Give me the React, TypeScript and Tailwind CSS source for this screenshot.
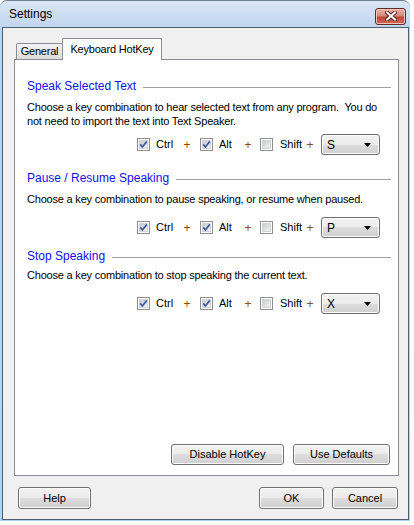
import React from 'react';

const btn =
  'flex items-center rounded-[3px] border border-[#707070] bg-[linear-gradient(to_bottom,#f2f2f2_0%,#ebebeb_50%,#dddddd_50%,#cfcfcf_100%)] text-[11px] text-black shadow-[inset_0_0_0_1px_#fcfcfc]';

const CheckBox: React.FC<{ checked?: boolean }> = ({ checked }) => (
  <svg width="13" height="13" viewBox="0 0 13 13" className="shrink-0">
    <defs>
      <linearGradient id="cbfill" x1="0" y1="0" x2="1" y2="1">
        <stop offset="0" stopColor="#c4c8ce" />
        <stop offset="1" stopColor="#f6f6f6" />
      </linearGradient>
    </defs>
    <rect x="0.5" y="0.5" width="12" height="12" fill="#ffffff" stroke="#8e8f8f" />
    <rect x="2.5" y="2.5" width="8" height="8" fill="url(#cbfill)" stroke="#d2d4d8" />
    {checked && (
      <path d="M3.2 6.4 L5.4 9 L9.8 3.4" fill="none" stroke="#3e5c9a" strokeWidth="1.7" />
    )}
  </svg>
);

const Plus = () => (
  <span className="w-[14px] text-center text-[12px] text-[#8a4a10]">+</span>
);

const Combo: React.FC<{ value: string }> = ({ value }) => (
  <div className={`${btn} ml-[4px] h-[21px] w-[59px] justify-between pl-[5px] pr-[8px] text-[12px]`}>
    <span>{value}</span>
    <svg width="7" height="4" viewBox="0 0 7 4">
      <polygon points="0,0 7,0 3.5,4" fill="#000" />
    </svg>
  </div>
);

const HotKeyRow: React.FC<{ keyName: string; top: string }> = ({ keyName, top }) => (
  <div className={`flex h-[21px] items-center pl-[110px] text-[11px] ${top}`}>
    <CheckBox checked />
    <span className="ml-[6px] w-[24px]">Ctrl</span>
    <Plus />
    <span className="ml-[6px] flex"><CheckBox checked /></span>
    <span className="ml-[6px] w-[22px]">Alt</span>
    <Plus />
    <span className="ml-[5px] flex"><CheckBox /></span>
    <span className="ml-[7px] w-[23px]">Shift</span>
    <Plus />
    <Combo value={keyName} />
  </div>
);

const Heading: React.FC<{ title: string; top: string }> = ({ title, top }) => (
  <div className={`flex h-[16px] items-center pr-[7px] ${top}`}>
    <span className="whitespace-nowrap text-[12px] text-[#1010ee]">{title}</span>
    <span className="ml-[7px] mt-[2px] h-px flex-1 bg-[#a0a0a0]" />
  </div>
);

export default function App() {
  return (
    <div className="min-h-screen bg-white font-['Liberation_Sans',Arial,sans-serif] text-black">
      <div className="flex h-[521px] w-[410px] flex-col rounded-t-[7px] border-t border-[#6e8296] bg-[linear-gradient(to_bottom,#d9e6f5_0px,#c0d6ee_26px,#b5d6f0_27px,#a9d6f2_100%)] pb-px pl-[2px] pr-px">
        {/* title bar */}
        <div className="flex h-[26px] items-center justify-between pl-[7px] pr-[3px]">
          <span className="text-[12px] text-black">Settings</span>
          <div className="mt-[4px] flex h-[17px] w-[31px] items-center justify-center rounded-[3px] border border-[#6a2a24] bg-[linear-gradient(to_bottom,#eab3a8_0%,#d9877a_45%,#c0473a_55%,#cf6a55_100%)] shadow-[inset_0_0_0_1px_#f0c4bb]">
            <svg width="12" height="10" viewBox="0 0 12 10">
              <path d="M2 1.5 L10 8.5 M10 1.5 L2 8.5" stroke="#5a2320" strokeWidth="4" strokeLinecap="square" />
              <path d="M2 1.5 L10 8.5 M10 1.5 L2 8.5" stroke="#ffffff" strokeWidth="2" strokeLinecap="square" />
            </svg>
          </div>
        </div>

        {/* client area */}
        <div className="flex flex-1 flex-col border border-[#4f5f70] bg-[#f0f0f0]">
          {/* tabs */}
          <div className="ml-[11px] mt-[10px] flex h-[21px] items-end">
            <div className="ml-[2px] flex h-[16px] w-[47px] items-center justify-center rounded-t-[2px] border border-b-0 border-[#898c95] bg-[linear-gradient(to_bottom,#f3f3f3,#dcdcdc)] text-[11px] tracking-[-0.2px]">
              General
            </div>
            <div className="relative z-10 -mb-px -ml-px flex h-[22px] w-[100px] items-start justify-center rounded-t-[2px] border border-b-0 border-[#898c95] bg-white pt-[2px] text-[11px] tracking-[-0.2px]">
              Keyboard HotKey
            </div>
          </div>

          {/* panel */}
          <div className="ml-[11px] flex h-[417px] w-[385px] flex-col border border-[#898c95] bg-white pb-[10px] pl-[12px]">
            <Heading title="Speak Selected Text" top="mt-[18px]" />
            <div className="mt-[6px] whitespace-pre text-[11px] leading-[14px] tracking-[-0.2px]">
              {'Choose a key combination to hear selected text from any program.  You do\nnot need to import the text into Text Speaker.'}
            </div>
            <HotKeyRow keyName="S" top="mt-[6px]" />

            <Heading title="Pause / Resume Speaking" top="mt-[15px]" />
            <div className="mt-[6px] whitespace-pre text-[11px] leading-[14px] tracking-[-0.2px]">
              Choose a key combination to pause speaking, or resume when paused.
            </div>
            <HotKeyRow keyName="P" top="mt-[11px]" />

            <Heading title="Stop Speaking" top="mt-[10px]" />
            <div className="mt-[4px] whitespace-pre text-[11px] leading-[14px] tracking-[-0.2px]">
              Choose a key combination to stop speaking the current text.
            </div>
            <HotKeyRow keyName="X" top="mt-[11px]" />

            <div className="flex-1" />
            <div className="flex justify-end gap-[9px] pr-[8px]">
              <button className={`${btn} h-[21px] w-[113px] justify-center`}>Disable HotKey</button>
              <button className={`${btn} h-[21px] w-[97px] justify-center`}>Use Defaults</button>
            </div>
          </div>

          {/* dialog buttons */}
          <div className="mt-[11px] flex items-center pl-[15px] pr-[10px]">
            <button className={`${btn} h-[22px] w-[73px] justify-center`}>Help</button>
            <div className="flex-1" />
            <button className={`${btn} h-[22px] w-[65px] justify-center border-[#3c7fb1] shadow-[inset_0_0_0_1px_#c6e4f7]`}>OK</button>
            <button className={`${btn} ml-[8px] h-[22px] w-[66px] justify-center`}>Cancel</button>
          </div>
        </div>
      </div>
    </div>
  );
}
